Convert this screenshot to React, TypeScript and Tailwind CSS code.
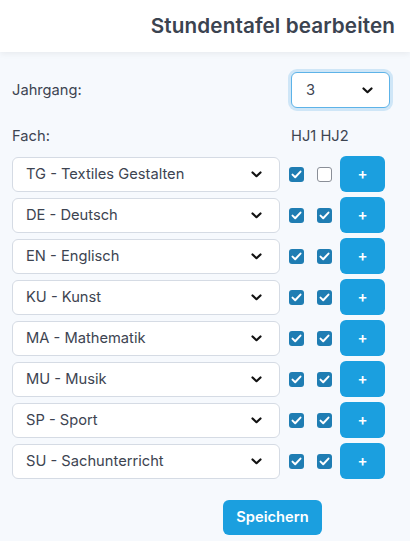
import React, { useState } from 'react';

const subjects = [
  { label: 'TG - Textiles Gestalten', hj1: true, hj2: false },
  { label: 'DE - Deutsch', hj1: true, hj2: true },
  { label: 'EN - Englisch', hj1: true, hj2: true },
  { label: 'KU - Kunst', hj1: true, hj2: true },
  { label: 'MA - Mathematik', hj1: true, hj2: true },
  { label: 'MU - Musik', hj1: true, hj2: true },
  { label: 'SP - Sport', hj1: true, hj2: true },
  { label: 'SU - Sachunterricht', hj1: true, hj2: true },
];

function Chevron() {
  return (
    <svg width="11" height="7" viewBox="0 0 11 7" fill="none" className="shrink-0">
      <path d="M1.5 1.5 L5.5 5.2 L9.5 1.5" stroke="#111" strokeWidth="2.2" strokeLinecap="round" strokeLinejoin="round" />
    </svg>
  );
}

function Check({ checked }: { checked: boolean }) {
  if (!checked) {
    return <span className="w-[15px] h-[15px] rounded-[3px] border border-[#8a8f98] bg-white block" />;
  }
  return (
    <span className="w-[15px] h-[15px] rounded-[3px] bg-[#1f7db3] flex items-center justify-center">
      <svg width="11" height="9" viewBox="0 0 11 9" fill="none">
        <path d="M1.5 4.6 L4.2 7.2 L9.5 1.6" stroke="#fff" strokeWidth="2" strokeLinecap="round" strokeLinejoin="round" />
      </svg>
    </span>
  );
}

export default function App() {
  const [rows] = useState(subjects);

  return (
    <div className="min-h-screen w-[410px] bg-[#f6f9fd] text-[#3d4451] font-['Inter',sans-serif]">
      {/* header */}
      <div className="h-[52px] bg-white shadow-[0_2px_6px_rgba(0,0,0,0.06)] flex items-center justify-end pr-[15px]">
        <h1 className="text-[20.7px] font-semibold text-[#3b4350] tracking-[0.1px]">Stundentafel bearbeiten</h1>
      </div>

      <div className="px-3 pt-[20px]">
        <div className="flex items-center justify-between text-[14.7px]">
          <span>Jahrgang:</span>
          <div className="mr-[8px] w-[99px] h-[36px] rounded-md border border-[#5db3e8] ring-[3px] ring-[#cfe6f7] bg-white flex items-center justify-between pl-[14px] pr-[16px]">
            <span>3</span>
            <Chevron />
          </div>
        </div>

        <div className="flex items-center mt-[18px] text-[14.7px] h-[20px]">
          <span className="w-[279px]">Fach:</span>
          <span>HJ1 HJ2</span>
        </div>

        <div className="mt-[10px] flex flex-col gap-[5px]">
          {rows.map((r) => (
            <div key={r.label} className="flex items-center">
              <div className="w-[268px] h-[35px] rounded-md border border-[#d5dbe4] bg-white flex items-center justify-between pl-[13px] pr-[17px] text-[14.7px]">
                <span>{r.label}</span>
                <Chevron />
              </div>
              <div className="ml-[9px]">
                <Check checked={r.hj1} />
              </div>
              <div className="ml-[13px]">
                <Check checked={r.hj2} />
              </div>
              <button className="ml-[8px] w-[45px] h-[36px] rounded-md bg-[#1b9fdf] text-white text-[15px] font-semibold flex items-center justify-center">
                +
              </button>
            </div>
          ))}
        </div>

        <div className="mt-[21px] pl-[211px]">
          <button className="w-[99px] h-[35px] rounded-md bg-[#1b9fdf] text-white text-[14.7px] font-semibold">
            Speichern
          </button>
        </div>
      </div>
    </div>
  );
}
